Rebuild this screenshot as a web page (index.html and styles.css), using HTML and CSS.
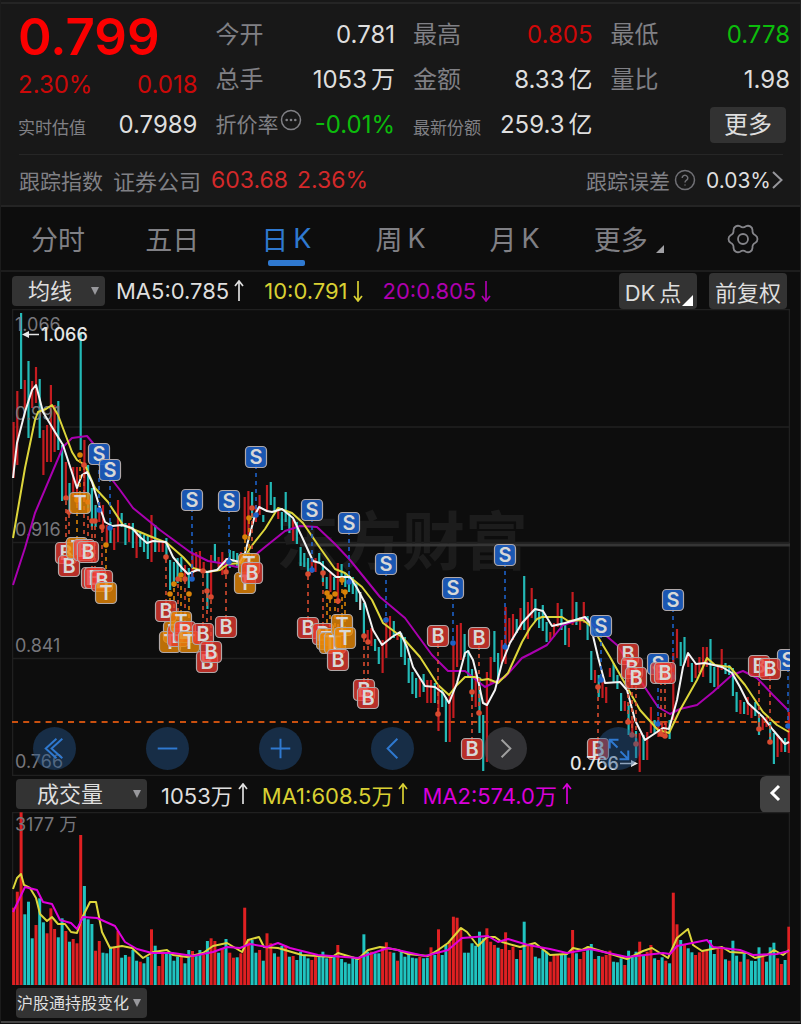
FILE: index.html
```html
<!DOCTYPE html>
<html lang="zh-CN">
<head>
<meta charset="utf-8">
<meta name="viewport" content="width=device-width, initial-scale=1">
<title>证券公司 日K</title>
<link rel="stylesheet" href="styles.css">
</head>
<body>
<main class="app">
  <header class="quote">
    <div class="quote-grid">
      <div class="col summary">
        <div class="price">0.799</div>
        <div class="row change"><span>2.30%</span><span>0.018</span></div>
        <div class="row estimate"><span class="label small">实时估值</span><span class="value">0.7989</span></div>
      </div>
      <div class="col">
        <div class="row"><span class="label">今开</span><span class="value">0.781</span></div>
        <div class="row"><span class="label">总手</span><span class="value">1053<span class="unit">万</span></span></div>
        <div class="row"><span class="label medium">折价率<svg class="dots" viewBox="0 0 22 22" aria-hidden="true"><circle cx="11" cy="11" r="9.5" fill="none" stroke="currentColor" stroke-width="1.5"/><circle cx="6.7" cy="11" r="1.3"/><circle cx="11" cy="11" r="1.3"/><circle cx="15.3" cy="11" r="1.3"/></svg></span><span class="value down">-0.01%</span></div>
      </div>
      <div class="col">
        <div class="row"><span class="label">最高</span><span class="value up">0.805</span></div>
        <div class="row"><span class="label">金额</span><span class="value">8.33<span class="unit">亿</span></span></div>
        <div class="row"><span class="label small">最新份额</span><span class="value">259.3<span class="unit">亿</span></span></div>
      </div>
      <div class="col">
        <div class="row"><span class="label">最低</span><span class="value down">0.778</span></div>
        <div class="row"><span class="label">量比</span><span class="value">1.98</span></div>
        <div class="row more-row"><button class="more" type="button">更多</button></div>
      </div>
    </div>
    <div class="index-row">
      <span class="label medium">跟踪指数</span>
      <span class="label index-name">证券公司</span>
      <span class="index-value">603.68</span>
      <span class="index-value">2.36%</span>
      <a class="tracking" href="#error"><span class="label medium">跟踪误差</span><svg class="help" viewBox="0 0 22 22" aria-hidden="true"><circle cx="11" cy="11" r="9.5"/><path d="M8.2 9a2.8 2.7 0 1 1 4.4 2.2c-1 .7-1.6 1.1-1.6 2.3M11 15.4v1"/></svg><span class="tracking-value">0.03%</span><svg class="chevron" viewBox="0 0 11 20" aria-hidden="true"><path d="M1 2l8.500 8L1 18"/></svg></a>
    </div>
  </header>

  <nav class="tabs">
    <a href="#minute">分时</a>
    <a href="#five">五日</a>
    <a href="#day" class="active" aria-current="page">日<span class="k">K</span></a>
    <a href="#week">周<span class="k">K</span></a>
    <a href="#month">月<span class="k">K</span></a>
    <a href="#more">更多<svg class="corner" viewBox="0 0 8 8" aria-hidden="true"><path d="M8 0v8H0z"/></svg></a>
    <button type="button" aria-label="设置"><svg class="gear" viewBox="0 0 32 32" aria-hidden="true"><path d="M28.400 12.200A4.500 4.500 0 0 1 28.400 19.800A5 5 0 0 0 25.500 24.900A4.500 4.500 0 0 1 18.900 28.700A5 5 0 0 0 13.100 28.700A4.500 4.500 0 0 1 6.500 24.900A5 5 0 0 0 3.600 19.800A4.500 4.500 0 0 1 3.600 12.200A5 5 0 0 0 6.500 7.100A4.500 4.500 0 0 1 13.100 3.300A5 5 0 0 0 18.900 3.300A4.500 4.500 0 0 1 25.500 7.100A5 5 0 0 0 28.400 12.200Z"/><circle cx="16" cy="16" r="5"/></svg></button>
  </nav>

  <div class="toolbar">
    <span class="picker picker-ma"><select aria-label="主图指标"><option>均线</option></select><i class="caret"></i></span>
    <span class="reading c-white">MA5:0.785<svg class="arrow" viewBox="0 0 10 22"><path d="M5 1v20M1 6l4-5 4 5"/></svg></span>
    <span class="reading c-yellow">10:0.791<svg class="arrow" viewBox="0 0 10 22"><path d="M5 1v20M1 16l4 5 4-5"/></svg></span>
    <span class="reading c-magenta">20:0.805<svg class="arrow" viewBox="0 0 10 22"><path d="M5 1v20M1 16l4 5 4-5"/></svg></span>
    <span class="actions">
      <button class="chip" type="button">DK<span class="unit">点</span><svg class="chip-corner" viewBox="0 0 8 8" aria-hidden="true"><path d="M8 0v8H0z"/></svg></button>
      <button class="chip" type="button">前复权</button>
    </span>
  </div>

  <section class="chart">
    <svg class="plot" id="kline" viewBox="12 309 778 467" role="img" aria-label="日K线图"></svg>
    <div class="controls">
      <button type="button" aria-label="最早"><svg viewBox="0 0 44 44"><path d="M24 12L13 22l11 10M30 12L19 22l11 10"/></svg></button>
      <button type="button" aria-label="缩小"><svg viewBox="0 0 44 44"><path d="M12 22h20"/></svg></button>
      <button type="button" aria-label="放大"><svg viewBox="0 0 44 44"><path d="M12 22h20M22 12v20"/></svg></button>
      <button type="button" aria-label="向左"><svg viewBox="0 0 44 44"><path d="M27 12L17 22l10 10"/></svg></button>
      <button type="button" aria-label="向右" class="idle"><svg viewBox="0 0 44 44"><path d="M18 13l9 9-9 9"/></svg></button>
      <button type="button" aria-label="全屏"><svg viewBox="0 0 44 44"><path d="M13 22v-9h9M13 13l8 8M32 24v9h-9M32 33l-8-8"/></svg></button>
    </div>
  </section>

  <div class="toolbar volume-bar">
    <span class="picker picker-vol"><select aria-label="副图指标"><option>成交量</option></select><i class="caret"></i></span>
    <span class="reading c-white">1053万<svg class="arrow" viewBox="0 0 10 22"><path d="M5 1v20M1 6l4-5 4 5"/></svg></span>
    <span class="reading c-yellow">MA1:608.5万<svg class="arrow" viewBox="0 0 10 22"><path d="M5 1v20M1 6l4-5 4 5"/></svg></span>
    <span class="reading c-pink">MA2:574.0万<svg class="arrow" viewBox="0 0 10 22"><path d="M5 1v20M1 6l4-5 4 5"/></svg></span>
    <button class="collapse" type="button" aria-label="收起"><svg viewBox="0 0 12 18"><path d="M10 2L3 9l7 7"/></svg></button>
  </div>

  <section class="chart">
    <svg class="plot" id="volume" viewBox="12 812 778 173" role="img" aria-label="成交量图"></svg>
  </section>

  <div class="toolbar bottom-bar">
    <span class="picker picker-flow"><select aria-label="附加指标"><option>沪股通持股变化</option></select><i class="caret"></i></span>
  </div>
</main>
<script src="chart.js"></script>
</body>
</html>
```
FILE: styles.css
```css
* { box-sizing: border-box; }
body {
  margin: 0;
  background: #0d0d0d;
  color: #dedede;
  font-family: Inter, "Noto Sans CJK SC", sans-serif;
  font-size: 24px;
}
button, select { font: inherit; color: inherit; border: 0; margin: 0; }
button { padding: 0; background: none; }
a { color: inherit; text-decoration: none; }
.app { border-left: 1px solid #1c1c1c; border-right: 1px solid #242424; }

.quote { background: #181818; border-bottom: 2px solid #242424; padding-top: 2px; }
.quote-grid {
  display: grid;
  grid-template-columns: repeat(4, 1fr);
  gap: 18px;
  border-top: 2px solid #252525;
  padding: 8px 10px 7px 17px;
}
.col { display: flex; flex-direction: column; }
.row { display: flex; align-items: center; justify-content: space-between; height: 45px; white-space: nowrap; line-height: 32px; }
.label { color: #808085; }
.medium { font-size: 21px; }
.small { font-size: 17px; padding-top: 6px; }
.unit { margin-left: 4px; }
.up { color: #cf0808; }
.down { color: #0cbc0c; }
.price { height: 50px; line-height: 50px; font-size: 51px; font-weight: 600; color: #fb0000; }
.change { height: 46px; color: #cb0909; }
.estimate { height: 34px; }
.dots { width: 22px; height: 22px; margin-left: 1px; vertical-align: 1px; fill: currentColor; }
.more-row { justify-content: flex-end; }
.more { width: 76px; height: 36px; margin-right: 4px; border-radius: 4px; background: #323232; }
.index-row {
  display: flex;
  align-items: center;
  height: 51px;
  margin: 0 17px 0 18px;
  border-top: 1px solid #262626;
  white-space: nowrap;
}
.index-name { font-size: 22px; margin: 0 10px; }
.index-value { font-size: 23px; color: #d3292a; margin-right: 9px; }
.tracking { display: flex; align-items: center; margin-left: auto; }
.help { width: 22px; height: 22px; margin: 0 10px 0 4px; fill: none; stroke: #707075; stroke-width: 1.5; }
.tracking-value { font-size: 21px; }
.chevron { width: 11px; height: 20px; margin-left: 1px; fill: none; stroke: #96969b; stroke-width: 2; }

.tabs { display: flex; height: 65px; border-bottom: 2px solid #1d1d1d; font-size: 27px; color: #808085; }
.tabs a, .tabs button { position: relative; flex: 1; display: flex; align-items: center; justify-content: center; }
.k { margin-left: 5px; }
.tabs .active { color: #2f79d0; }
.active::after { content: ""; position: absolute; bottom: 4px; width: 37px; height: 6px; border-radius: 2px; background: #2f79d0; }
.corner { width: 8px; height: 8px; margin: 20px 0 0 8px; fill: #a0a0a4; }
.gear { width: 32px; height: 32px; fill: none; stroke: #85858a; stroke-width: 1.8; }

.toolbar { display: flex; align-items: center; height: 37px; padding: 0 13px 0 11px; font-size: 22px; white-space: nowrap; }
.picker { position: relative; display: flex; flex: none; height: 30px; margin-right: 11px; border-radius: 4px; background: #333; }
.picker select { width: 100%; height: 30px; padding: 0 0 0 16px; background: transparent; appearance: none; }
.picker-ma { width: 93px; }
.picker-vol, .picker-flow { width: 131px; margin-right: 14px; }
.picker-vol select { padding-left: 21px; }
.picker-flow select { padding-left: 1px; font-size: 16px; }
.caret { position: absolute; right: 6px; top: 11px; border: 4px solid transparent; border-top: 8px solid #98989c; border-bottom: 0; pointer-events: none; }
.reading { display: flex; align-items: center; margin-right: 20px; }
.arrow { width: 10px; height: 22px; margin-left: 5px; fill: none; stroke: currentColor; stroke-width: 1.7; }
.c-white { color: #dedede; }
.c-yellow { color: #d9d033; }
.c-magenta { color: #ad00ad; }
.c-pink { color: #d900d9; }
.actions { display: flex; gap: 12px; margin-left: auto; }
.chip { position: relative; width: 78px; height: 36px; border-radius: 4px; background: #333; }
.chip:first-child { padding-right: 10px; }
.chip-corner { position: absolute; right: 4px; bottom: 3px; width: 11px; height: 11px; fill: #fff; }
.volume-bar { height: 36px; padding: 0 10px 0 15px; }
.volume-bar .reading { margin-right: 14px; }
.bottom-bar { padding-left: 15px; height: 38px; border-bottom: 2px solid #444; }
.collapse { width: 30px; height: 37px; margin-left: auto; border-radius: 6px 0 0 6px; background: #414141; }
.collapse svg { width: 12px; height: 18px; fill: none; stroke: #fff; stroke-width: 3; }

.chart { position: relative; padding: 0 10px 0 11px; }
.plot { display: block; width: 100%; height: auto; overflow: hidden; }
.controls { position: absolute; left: 4%; bottom: 6px; width: 76%; display: flex; justify-content: space-between; }
.controls button { width: 43px; height: 43px; border-radius: 50%; background: rgba(35, 84, 140, 0.45); }
.controls svg { display: block; width: 100%; fill: none; stroke: #2f79d0; stroke-width: 2; }
.controls .idle { background: rgba(75, 75, 80, 0.6); }
.controls .idle svg { stroke: #a0a0a0; }

.grid { stroke: #202020; stroke-width: 1.5; fill: none; }
.axis { fill: #77777c; font-size: 18px; }
.peak { fill: #e6e6e6; font-size: 18px; font-weight: 500; }
.watermark { fill: #1c1c1c; font-size: 63px; font-weight: 700; }
.line { fill: none; stroke-width: 2; stroke-linejoin: round; }
.mark { fill: #d8d8d8; font-size: 20px; font-weight: 600; text-anchor: middle; }
```
FILE: chart.js
```js
const RED = '#c51c20', CYAN = '#23b9b6';
const STEP = 3.727, FIRST = 13.6;
const xOf = i => FIRST + i * STEP;

// Each entry: colour code, high, low.
const candles = `R422,478 R391,465 C313,389 R380,412 C361,438 R381,408 R367,403 C379,438 R430,475 R425,462 R385,462 R405,452 C401,450 C445,501 R462,498 C483,513 R467,497 R467,505 C332,450 R440,502
C465,513 C488,527 C505,527 R502,522 R505,532 R525,545 C522,543 R528,550 R500,542 C513,527 C523,545 R523,542 C523,548 R532,558 C532,547 C535,552 C535,559 R515,562 C525,552 R542,552
R542,552 C538,555 C560,590 C562,587 C558,583 C557,572 R565,582 C568,588 R553,577 R552,572 R551,570 R562,572 C572,609 R555,598 C544,563 R557,567 R552,575 R558,572 C550,568 C551,562
C553,568 R552,565 R497,538 R491,535 C492,518 R505,522 R495,515 C515,522 R485,512 C482,505 C497,513 R510,519 C512,530 C492,522 C513,533 R520,541 C522,544 C547,566 C553,567 C558,573
R560,573 R558,572 C553,563 C561,582 C577,589 R573,592 C577,590 R563,600 C564,577 C573,587 C575,592 C577,594 C583,602 W592,610 C603,637 R630,640 R628,646 C639,651 C647,664 R640,673
R617,658 R616,640 C621,638 R633,640 C633,657 C637,665 C658,683 C672,694 C678,698 R678,697 C674,692 R680,703 R680,703 C683,703 R685,731 C690,707 C697,742 R693,742 R642,718 R625,667
R623,660 C634,657 C650,677 C669,697 R672,707 C677,733 C715,771 R672,762 R657,683 C631,662 C653,680 R640,663 R607,664 R618,643 R614,640 C619,633 R608,630 C576,630 R602,639 R588,618
C599,621 C612,628 C605,631 C622,642 R632,640 R623,637 R603,627 C609,630 C622,645 R628,647 R592,625 C602,625 R617,630 R602,623 C616,640 C651,680 R670,683 C675,697 R678,698 R687,703
R668,677 C663,682 C675,689 C693,711 R701,711 C705,735 R720,737 C731,758 R733,772 C735,760 R732,760 R707,733 C720,733 R717,737 R723,737 R722,738 C720,739 R653,720 R629,658 C642,666
C637,663 R653,667 C663,682 R663,678 R657,673 R647,677 R647,667 C639,683 C667,687 R667,689 R649,670 C663,674 C665,675 C668,696 C692,712 R700,714 C702,714 R697,715 R707,718 C702,716
C712,735 R717,730 R717,727 C722,742 C733,764 R735,757 R738,752 C738,752 R712,753`.split(/\s+/);

// Colour code and bar height in thirds of a unit.
const volumes = `R232 R280 R518 C212 C250 C140 R180 C260 C188 R155 R230 R168 C143 C200 R162 C130 R138 R125 R450 C297 C197 C183 R103 R132 C97 C95 C115 R115 R162 C82 C90 R85 C105 C73 R70 C65 C85 R167 C118 R57
R95 C95 C100 C73 C85 R85 C65 C105 R102 C90 C105 R90 C132 R140 R132 C97 R110 C138 R97 R82 C83 R95 R232 R138 C135 C97 R105 C73 R155 R125 C95 R85 C117 R118 C85 R87 C75 C100 C90 C80
R75 R85 C85 C100 C80 R90 C85 R120 C78 C68 C64 C85 C82 R85 C152 C100 R100 C95 C95 R115 R128 R100 C97 R73 C100 C85 C95 C82 C80 R85 C80 C82 R113 C90 R167 C90 C120 R130 R205 R202
R172 C97 C97 C125 C118 C160 C140 R170 R130 R120 C112 R108 R158 R105 R115 C78 R105 C190 R120 R122 C85 C80 C105 C100 R70 R90 R90 C93 C90 R82 R165 C95 R78 R100 C115 C123 R78 C87 R85 R90
R103 C70 C68 C80 R60 C103 C85 C100 R130 C90 R100 R120 C80 R75 C83 R73 C65 R277 R182 C135 R122 C110 C98 R90 R98 R105 R105 C135 C93 R110 R110 C77 R73 C133 C88 R70 C93 R77 C73 C72
C113 R85 C70 C113 C127 R80 R63 C75 R175`.split(/\s+/);

const ma5 = '13,478 17,443 25,412 32,390 36,385 43,412 55,432 63,445 77,488 82,475 87,472 92,482 99,505 105,522 112,526 122,525 132,528 140,537 147,543 153,541 166,542 173,557 182,568 188,574 197,570 207,572 217,570 227,559 240,562 245,553 255,515 259,507 267,511 272,512 282,509 293,518 302,537 313,561 320,563 336,577 350,577 357,588 365,603 373,630 382,645 392,637 400,632 407,647 413,667 425,686 435,687 443,693 449,703 457,683 465,653 468,651 473,660 478,680 483,703 487,705 495,690 502,663 510,643 522,623 535,609 543,611 552,626 565,623 585,617 590,623 598,657 605,683 620,682 627,690 635,720 645,740 663,728 669,729 677,700 683,667 688,653 696,664 705,663 722,667 732,673 740,687 748,703 763,717 773,730 785,744 789,742';
const ma10 = '13,538 25,468 35,420 38,412 46,409 52,405 58,415 72,452 77,460 85,465 95,488 108,502 123,525 147,535 167,543 183,557 193,568 207,572 220,570 228,564 242,563 250,548 265,529 278,508 292,513 303,523 318,545 335,569 345,573 362,587 372,600 383,623 403,638 420,657 438,685 449,695 457,685 465,677 475,677 482,680 488,679 498,683 508,673 522,642 530,628 537,619 542,617 562,617 568,621 583,620 592,627 610,657 627,687 640,710 658,730 669,733 680,710 697,680 707,658 715,665 730,667 745,685 763,712 777,725 789,732';
const ma20 = '13,585 25,548 35,513 63,447 72,438 87,436 97,448 110,477 120,490 133,508 160,530 190,552 208,561 220,563 237,567 253,557 265,547 285,531 300,526 317,527 335,544 350,560 380,597 405,618 432,655 448,671 465,671 485,687 505,677 522,658 530,654 547,645 563,625 585,618 597,628 617,645 640,680 658,707 670,714 680,709 697,705 713,692 732,675 743,671 757,678 773,695 789,711';
const vol1 = '13,889 17,878 21,874 24,885 30,888 36,898 40,914 47,921 52,917 58,924 65,924 71,932 77,933 82,918 90,902 96,902 102,932 110,948 122,946 132,948 143,958 153,952 167,950 173,955 187,957 203,953 213,946 227,943 242,952 248,940 259,937 264,947 278,948 302,955 332,957 338,953 358,959 368,950 380,947 398,950 408,954 428,956 438,950 448,943 461,928 467,932 478,946 487,937 495,937 502,942 520,947 535,943 550,955 567,954 573,948 582,950 588,947 627,959 643,951 652,948 668,958 677,938 688,929 693,945 702,951 722,947 730,952 747,953 755,958 767,955 774,950 783,955 789,950';
const vol2 = '13,912 25,887 37,890 43,902 52,904 60,920 71,923 77,929 83,917 97,918 115,926 125,942 137,949 152,953 173,953 193,956 213,952 227,947 240,948 250,944 267,947 278,943 290,948 318,955 358,958 388,948 425,956 448,950 462,938 488,936 498,942 508,939 528,945 550,949 567,953 590,949 627,957 663,953 670,954 677,946 707,940 713,947 740,950 753,955 777,954 789,951';

// Kind, x, y of the badge, y of the bar it belongs to.
const marks = [
  ['S',99,454,510],['S',110,470,528],['S',192,500,579],['S',229,501,562],['S',256,457,515],['S',312,510,570],
  ['S',349,523,582],['S',386,564,620],['S',453,588,643],['S',505,555,647],['S',601,626,680],['S',658,664,724],
  ['S',673,600,677],['S',788,660,726],
  ['B',66,553,498],['B',69,566,512],['T',77,548,500],['T',80,503,455],['B',84,550,465],['B',88,552,502],
  ['B',92,578,521],['B',95,578,521],['B',102,581,527],['T',106,593,545],
  ['B',166,611,557],['T',174,632,584],['T',170,642,594],['B',178,636,579],['T',181,622,575],['B',185,632,579],
  ['T',189,642,594],['B',203,634,571],['B',207,662,591],['B',211,652,597],['B',226,627,572],
  ['T',245,583,537],['T',249,564,518],['B',252,573,508],
  ['B',308,628,574],['B',323,634,573],['T',327,639,593],['T',330,643,597],['T',335,643,594],['T',342,625,580],
  ['T',345,638,592],['B',338,660,601],['B',364,690,636],['B',368,698,642],
  ['B',438,636,714],['B',479,638,713],['B',472,749,692],['B',598,749,687],['B',628,654,722],['B',632,668,735],
  ['B',636,678,744],['B',661,673,734],['B',665,673,736],['B',759,666,729],['B',770,669,742]
];
const tint = {
  S: ['#1d61c8', 'rgba(28,94,196,.9)'],
  B: ['#d94b30', 'rgba(236,58,48,.76)'],
  T: ['#d98207', 'rgba(232,136,6,.8)']
};

const line = (pts, colour) => `<polyline class="line" points="${pts}" stroke="${colour}"/>`;
const grid = ys => ys.map(y => `<path class="grid" d="M12 ${y}H790"/>`).join('');

let k = '<rect class="grid" x="12.5" y="309.5" width="777" height="466"/>' + grid([427, 542.5, 658.5]);
k += '<text class="watermark" x="276" y="564">东方财富</text>';
k += '<path d="M300 545H790" stroke="#353535" stroke-width="3"/>';
k += '<path d="M12 722H790" stroke="#c9500f" stroke-width="1.8" stroke-dasharray="6 5.200"/>';
candles.forEach((c, i) => {
  const [hi, lo] = c.slice(1).split(',').map(Number);
  const colour = c[0] === 'R' ? RED : c[0] === 'C' ? CYAN : '#ddd';
  k += `<path d="M${xOf(i).toFixed(1)} ${hi}V${lo}" stroke="${colour}" stroke-width="2.200"/>`;
});
k += [[331,'1.066'],[420,'0.991'],[536,'0.916'],[652,'0.841'],[768,'0.766']]
  .map(([y, t]) => `<text class="axis" x="15" y="${y}">${t}</text>`).join('');
k += line(ma20, '#aa00b0') + line(ma10, '#ddd63b') + line(ma5, '#f4f4f4');
marks.forEach(([t, x, y, end]) => {
  k += `<path d="M${x} ${y}V${end}" stroke="${tint[t][0]}" stroke-width="1.6" stroke-dasharray="4 4"/><circle cx="${x}" cy="${end}" r="2.800" fill="${tint[t][0]}"/>`;
});
marks.forEach(([t, x, y]) => {
  k += `<rect x="${x - 10.5}" y="${y - 10.5}" width="21" height="21" rx="4" fill="${tint[t][1]}" stroke="#b0a8a8" stroke-width="1.200"/><text class="mark" x="${x}" y="${y + 7}">${t}</text>`;
});
k += '<text class="peak" x="41" y="341">1.066</text><path d="M25 334.5H39" stroke="#e6e6e6" stroke-width="1.500"/><path d="M22 334.5l7-3.500v7z" fill="#e6e6e6"/>';
k += '<text class="peak" x="570" y="770">0.766</text><path d="M620 763.5H634" stroke="#e6e6e6" stroke-width="1.500"/><path d="M638 763.5l-7-3.500v7z" fill="#e6e6e6"/>';
document.getElementById('kline').innerHTML = k;

let v = '<rect class="grid" x="12.5" y="812.5" width="777" height="172"/>';
volumes.forEach((b, i) => {
  const h = Number(b.slice(1)) / 3;
  v += `<rect x="${(xOf(i) - 1.5).toFixed(1)}" y="${(985 - h).toFixed(1)}" width="3" height="${h.toFixed(1)}" fill="${b[0] === 'R' ? '#df2022' : '#20c4c1'}"/>`;
});
v += '<text class="axis" x="15" y="831">3177 万</text>';
v += line(vol1, '#ddd63b') + line(vol2, '#e000dc');
document.getElementById('volume').innerHTML = v;
```
